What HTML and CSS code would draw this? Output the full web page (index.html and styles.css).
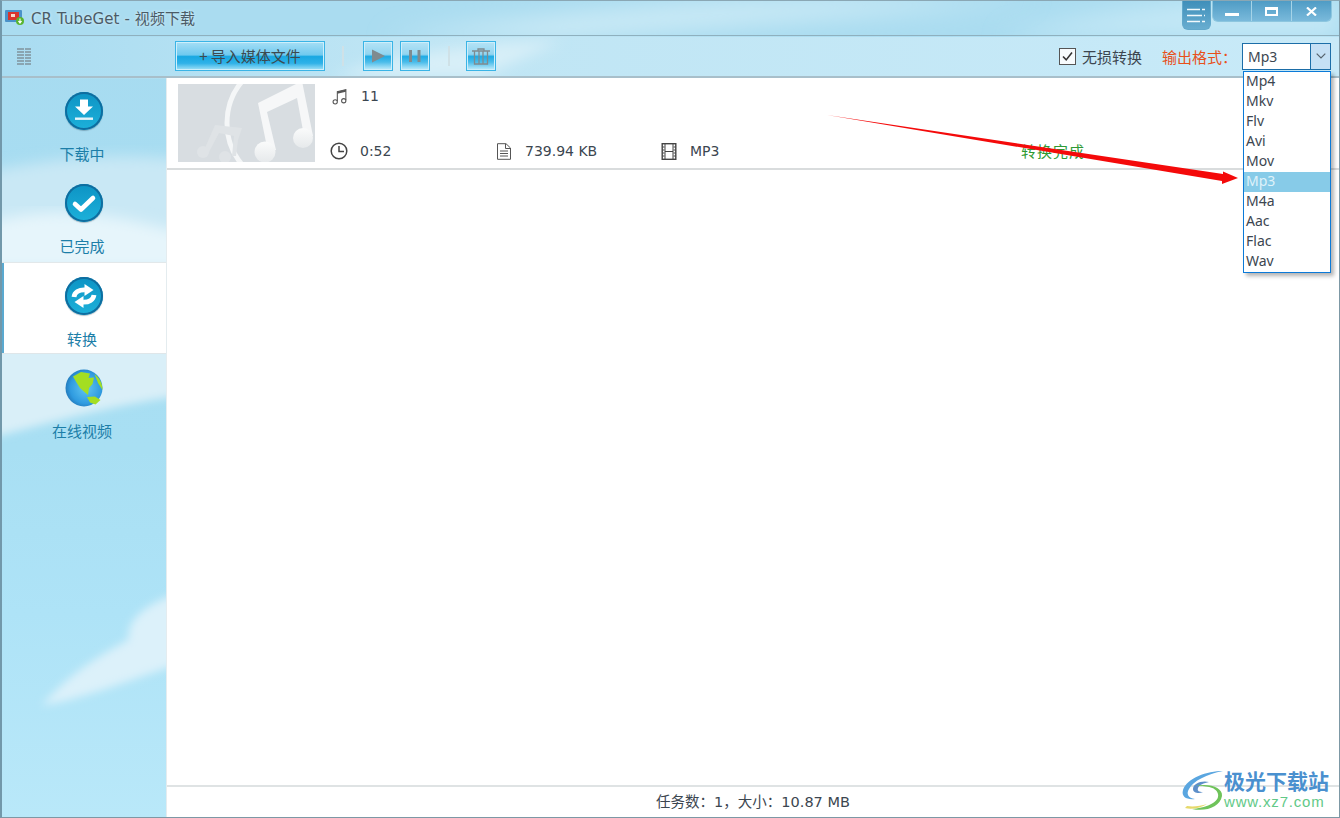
FILE: index.html
```html
<!DOCTYPE html>
<html lang="zh">
<head>
<meta charset="utf-8">
<title>CR TubeGet - 视频下载</title>
<link rel="stylesheet" href="styles.css">
</head>
<body>
<div class="window">
  <svg class="sky" viewBox="0 0 1340 818" preserveAspectRatio="none" aria-hidden="true">
    <defs>
      <linearGradient id="skyg" x1="0" y1="0" x2="0" y2="1">
        <stop offset="0" stop-color="#a7dbf0"/><stop offset=".55" stop-color="#a8dff3"/><stop offset=".75" stop-color="#aee3f7"/><stop offset="1" stop-color="#b9e8f9"/>
      </linearGradient>
      <linearGradient id="tbar" x1="0" y1="0" x2="1" y2="0">
        <stop offset="0" stop-color="#a9dcf1"/><stop offset=".3" stop-color="#bfe5f4"/><stop offset="1" stop-color="#c8eaf8"/>
      </linearGradient>
      <filter id="blur3"><feGaussianBlur stdDeviation="4"/></filter>
      <filter id="blur6"><feGaussianBlur stdDeviation="7"/></filter>
      <filter id="blur14"><feGaussianBlur stdDeviation="12"/></filter>
    </defs>
    <rect width="1340" height="818" fill="url(#skyg)"/>
    <rect y="0" width="1340" height="36" fill="#aadcf0"/>
    <path d="M380 36 C560 14 760 -6 960 0 L1040 0 C900 10 700 24 560 36Z" fill="#d4eef8" filter="url(#blur14)"/>
    <path d="M1000 36 C1060 20 1130 6 1200 0 L1340 0 L1340 36Z" fill="#c4e8f6" filter="url(#blur14)"/>
    <rect y="36" width="1340" height="42" fill="url(#tbar)"/>
    <path d="M330 76 C400 52 470 42 560 40 L480 76Z" fill="#d8eff8" filter="url(#blur6)"/>
    <path d="M-20 172 C40 160 110 150 190 160 L190 262 L-20 262Z" fill="#c9e8f5" filter="url(#blur6)"/>
    <path d="M-20 225 C50 200 120 215 190 235 L190 270 L-20 270Z" fill="#e6f5fb" filter="url(#blur6)"/>
    <path d="M-20 345 L190 345 L190 394 C110 405 60 420 -20 440Z" fill="#d9eff8" filter="url(#blur3)"/>
    <path d="M190 590 L167 597 C140 608 125 622 127 640 C100 655 70 672 40 706 C80 700 130 680 190 660Z" fill="#dcf1fa" filter="url(#blur3)"/>
  </svg>

  <header class="titlebar">
    <div class="title">
      <svg class="app-icon" viewBox="0 0 20 18" aria-hidden="true">
        <rect x="0" y="2" width="17" height="12" rx="1" fill="#4a92c9"/>
        <rect x="3" y="4" width="11" height="8" fill="#d9342b"/>
        <rect x="6" y="6" width="4" height="3" fill="#f7d9c8"/>
        <circle cx="15" cy="13" r="4" fill="#58b52e"/>
        <path d="M15 10.500v4M13.400 13l1.600 2 1.600-2" stroke="#fff" stroke-width="1.100" fill="none"/>
      </svg>
      <span>CR TubeGet - 视频下载</span>
    </div>
    <div class="win-controls">
      <button class="menu-btn" aria-label="菜单">
        <svg viewBox="0 0 18 15" aria-hidden="true"><path d="M0 1.500h13M15 1.500h3M0 7.500h15M17 7.500h1M0 13.500h13M15 13.500h3" stroke="#f2f9fc" stroke-width="1.400"/></svg>
      </button>
      <div class="win-btns">
        <button class="win-btn" aria-label="最小化"><span class="glyph-min"></span></button>
        <button class="win-btn" aria-label="最大化"><span class="glyph-max"></span></button>
        <button class="win-btn" aria-label="关闭">
          <svg viewBox="0 0 11 9" aria-hidden="true"><path d="M1 .5l9 8M10 .5l-9 8" stroke="#fff" stroke-width="2.200"/></svg>
        </button>
      </div>
    </div>
  </header>

  <div class="toolbar">
    <svg class="list-icon" viewBox="0 0 14 17" aria-hidden="true">
      <path d="M0 1h14M0 4h14M0 7h14M0 10h14M0 13h14M0 16h14" stroke="#6b6f72" stroke-width="1.200" stroke-dasharray="7 1 6 0"/>
    </svg>
    <button class="import-btn">+ 导入媒体文件</button>
    <span class="sep sep-a"></span>
    <button class="tool-btn tool-play" aria-label="播放"><svg viewBox="0 0 14 14" aria-hidden="true"><path d="M0 0l14 7-14 7z" fill="#7f8b90"/></svg></button>
    <button class="tool-btn tool-pause" aria-label="暂停"><svg viewBox="0 0 14 14" aria-hidden="true"><path d="M1 1h3v12H1zM9.500 1h3v12h-3z" fill="#7f8b90"/></svg></button>
    <span class="sep sep-b"></span>
    <button class="tool-btn tool-del" aria-label="删除"><svg viewBox="0 0 20 17" aria-hidden="true"><path d="M1 3h18M3.500 3V16H16.500V3M8 3.500V15.500M12 3.500V15.500M7 3V1h6v2" stroke="#7f8b90" stroke-width="1.300" fill="none"/></svg></button>
    <div class="tool-right">
      <label class="lossless"><span class="checkbox"><svg viewBox="0 0 15 15" aria-hidden="true"><path d="M3 7.500l3.200 3.400L12 3.600" stroke="#333" stroke-width="1.600" fill="none"/></svg></span>无损转换</label>
      <span class="format-label">输出格式：</span>
      <div class="combo">
        <span class="combo-value">Mp3</span>
        <span class="combo-arrow"><svg viewBox="0 0 10 6" aria-hidden="true"><path d="M.7.7L5 5l4.300-4.300" stroke="#56626c" stroke-width="1.200" fill="none"/></svg></span>
      </div>
    </div>
  </div>

  <div class="body">
    <nav class="sidebar">
      <a class="nav-item">
        <span class="round-icon"><svg viewBox="0 0 38 38" aria-hidden="true"><path d="M15 7.500h8v7h5l-9 8.500-9-8.500h5z" fill="#fff"/><rect x="10" y="25.500" width="18" height="2.400" fill="#e3f3f9"/></svg></span>
        <span class="nav-label">下载中</span>
      </a>
      <a class="nav-item">
        <span class="round-icon"><svg viewBox="0 0 38 38" aria-hidden="true"><path d="M10 20l6 5.500 12-11.500" stroke="#fff" stroke-width="4.600" fill="none" stroke-linecap="round" stroke-linejoin="round"/></svg></span>
        <span class="nav-label">已完成</span>
      </a>
      <a class="nav-item active">
        <span class="round-icon"><svg viewBox="0 0 38 38" aria-hidden="true">
          <path d="M9 20C9.500 15.500 14 12.500 20 12.800" stroke="#fff" stroke-width="4.800" fill="none"/><path d="M19.500 7L28.500 13l-9 6z" fill="#fff"/>
          <g transform="rotate(180 19 19)"><path d="M9 20C9.500 15.500 14 12.500 20 12.800" stroke="#fff" stroke-width="4.800" fill="none"/><path d="M19.500 7L28.500 13l-9 6z" fill="#fff"/></g>
        </svg></span>
        <span class="nav-label">转换</span>
      </a>
      <a class="nav-item">
        <span class="globe"><svg viewBox="0 0 38 38" aria-hidden="true">
          <defs><radialGradient id="gl" cx=".55" cy=".5" r=".6"><stop offset="0" stop-color="#62c6f1"/><stop offset=".7" stop-color="#2f9be0"/><stop offset="1" stop-color="#1f70b0"/></radialGradient></defs>
          <circle cx="19" cy="19" r="18.500" fill="url(#gl)"/>
          <path d="M8 7.500L16 3L25 4.500L23.500 9L29 8.500L27.500 15L24 19L23 26L19.500 23L15 19L11.500 13.500Z" fill="#a4de22"/>
          <path d="M22 28L30 27.500L35.500 31L30.500 35.500L25 33.500Z" fill="#a4de22"/>
          <path d="M29.500 5C34 8.500 37.500 14 37.500 21L33 14Z" fill="#a4de22"/>
        </svg></span>
        <span class="nav-label">在线视频</span>
      </a>
    </nav>

    <main class="content">
      <section class="task-row">
        <div class="thumb">
          <svg viewBox="0 0 137 78" aria-hidden="true">
            <defs><linearGradient id="noteg" x1="0" y1="0" x2="0" y2="1"><stop offset="0" stop-color="#fafbfb"/><stop offset="1" stop-color="#e6e9eb"/></linearGradient></defs>
            <rect width="137" height="78" fill="#d8dde1"/>
            <circle cx="114" cy="39" r="65" fill="none" stroke="#f4f6f7" stroke-width="5"/>
            <path d="M37 41L64 44L60 56L58 72L54 72L56 52L41 49L31 68L27 64Z" fill="#dfe3e6"/>
            <circle cx="25" cy="68" r="6" fill="#dfe3e6"/><circle cx="47" cy="73" r="6" fill="#dfe3e6"/>
            <path d="M80 19L124 -3L135 52L126 52L119 14L89 28L98 66L90 68Z" fill="#f6f7f8"/>
            <circle cx="125" cy="54" r="10" fill="url(#noteg)"/><circle cx="87" cy="68" r="10.500" fill="url(#noteg)"/>
          </svg>
        </div>
        <div class="meta">
          <div class="meta-line name">
            <svg class="ic ic-note" viewBox="0 0 15 15" aria-hidden="true"><path d="M5 12V3l8-2v10" stroke="#555" stroke-width="1" fill="none"/><path d="M5 3l8-2v2l-8 2z" fill="#555"/><circle cx="3" cy="12.500" r="2" fill="#fff" stroke="#555"/><circle cx="11" cy="11.500" r="2" fill="#fff" stroke="#555"/></svg>
            <span>11</span>
          </div>
          <div class="meta-line stats">
            <span class="stat stat-time">
              <svg class="ic" viewBox="0 0 18 18" aria-hidden="true"><circle cx="9" cy="9" r="7.800" fill="none" stroke="#444" stroke-width="1.500"/><path d="M9 4v5.500h5" stroke="#444" stroke-width="1.500" fill="none"/></svg>
              <span>0:52</span>
            </span>
            <span class="stat stat-size">
              <svg class="ic" viewBox="0 0 15 17" aria-hidden="true"><path d="M1 .7h8.500L14 5v11.300H1z" fill="none" stroke="#555"/><path d="M9 1v4.500h5M3.500 8h8M3.500 10.500h8M3.500 13h8" stroke="#555" fill="none"/></svg>
              <span>739.94 KB</span>
            </span>
            <span class="stat stat-type">
              <svg class="ic" viewBox="0 0 15 17" aria-hidden="true"><rect x=".7" y=".7" width="13.600" height="15.600" fill="none" stroke="#444" stroke-width="1.400"/><path d="M3.500 1v15M11.500 1v15M3.500 8.500h8" stroke="#444"/><path d="M1 4h2M1 7h2M1 10h2M1 13h2M12 4h2M12 7h2M12 10h2M12 13h2" stroke="#444"/></svg>
              <span>MP3</span>
            </span>
            <span class="stat-done">转换完成</span>
          </div>
        </div>
      </section>
      <div class="spacer"></div>
      <footer class="statusbar">任务数：1，大小：10.87 MB</footer>
    </main>
  </div>

  <ul class="dropdown">
    <li>Mp4</li><li>Mkv</li><li>Flv</li><li>Avi</li><li>Mov</li>
    <li class="selected">Mp3</li>
    <li>M4a</li><li>Aac</li><li>Flac</li><li>Wav</li>
  </ul>

  <svg class="arrow" viewBox="0 0 420 80" aria-hidden="true">
    <path d="M1 2 L397 61 L397 58.500 L412 65 L396 71 L396 68 Z" fill="#f40a0a"/>
  </svg>

  <div class="watermark">
    <svg class="wm-logo" viewBox="0 0 44 44" aria-hidden="true">
      <path d="M42 3C26 3 6 10 2 22c-2 7 4 10 12 9-7-1-9-5-6-10C12 13 26 6 42 3z" fill="#5aa6e0"/>
      <path d="M28 14c-8-2-16 2-16 7 0 4 6 5 10 3-4 0-6-1-5-4 1-3 6-5 11-6z" fill="#5d8fc9"/>
      <path d="M18 16c8 0 20 0 22 8 2 9-14 14-26 15 14 3 28-2 30-13 1-8-12-13-26-10z" fill="#6fc35a" transform="translate(-3 2)"/>
      <path d="M6 38c6 1 14 0 20-2-6 4-16 6-22 4z" fill="#e6d96a"/>
    </svg>
    <div class="wm-text">
      <div class="wm-cn">极光下载站</div>
      <div class="wm-url">www.xz7.com</div>
    </div>
  </div>
</div>
</body>
</html>
```
FILE: styles.css
```css
* { box-sizing: border-box; }
html, body { margin: 0; padding: 0; height: 100%; overflow: hidden; }
body { font-family: "DejaVu Sans", "Noto Sans CJK SC", sans-serif; font-size: 14px; color: #3c4650; }
button { font: inherit; padding: 0; border: 0; background: none; }

.window { position: relative; width: 1340px; height: 818px; display: flex; flex-direction: column; border: 1px solid #7d98a5; border-left: 2px solid #7298aa; border-top-color: #8aa7b4; overflow: hidden; }
.sky { position: absolute; inset: 0; width: 100%; height: 100%; }

.titlebar { position: relative; height: 35px; flex: none; display: flex; justify-content: space-between; border-bottom: 1px solid #8fb0be; }
.title { display: flex; align-items: center; gap: 6px; padding: 0 0 2px 3px; font-size: 15px; letter-spacing: .1px; color: #4b5b66; text-shadow: 0 0 3px #dff3fb; }
.app-icon { width: 20px; height: 18px; }
.win-controls { display: flex; align-items: flex-start; padding-right: 7px; gap: 1px; }
.menu-btn { width: 29px; height: 29px; border: 1px solid #62a8cb; border-top: 0; border-radius: 0 0 6px 6px; background: linear-gradient(#3f8fba, #68add0); display: flex; align-items: center; justify-content: center; }
.menu-btn svg { width: 18px; height: 15px; }
.win-btns { display: flex; height: 21px; background: linear-gradient(#4f9cc5, #7abadb); border: 1px solid #8cc6df; border-top: 0; border-radius: 0 0 6px 6px; }
.win-btn { width: 39.500px; display: flex; align-items: center; justify-content: center; border-right: 1px solid #a5d4e8; }
.win-btn:last-child { border-right: 0; }
.win-btn svg { width: 11px; height: 9px; }
.glyph-min { width: 14px; height: 3px; background: #fff; margin-top: 6px; }
.glyph-max { width: 13px; height: 9px; border: 2px solid #fff; border-top-width: 3px; }

.toolbar { position: relative; height: 42px; flex: none; display: flex; align-items: center; border-bottom: 2px solid #a8bfca; padding-left: 15px; font-family: "Noto Sans CJK SC", sans-serif; font-size: 15px; }
.list-icon { width: 14px; height: 17px; margin-right: 144px; }
.import-btn, .tool-btn { border: 1px solid #3ab4e6; box-shadow: inset 0 0 0 1px #cdeffb; }
.import-btn { width: 150px; height: 30px; color: #3c4a50; font-size: 15px; font-family: "Noto Sans CJK SC", sans-serif; line-height: 28px; background: linear-gradient(#a6def5 0, #6fcaef 46%, #19a8e2 52%, #2fb2e8 76%, #a4e2f7 100%); }
.sep { width: 2px; height: 20px; background: #cfe1e7; }
.sep-a { margin: 0 19px 0 17px; }
.sep-b { margin: 0 16px 0 18px; }
.tool-btn { width: 30px; height: 30px; display: flex; align-items: center; justify-content: center; background: linear-gradient(#b5e3f6 0, #92d5f0 44%, #1fabe4 52%, #4cbdea 72%, #c5edfb 100%); }
.tool-btn svg { width: 14px; height: 14px; }
.tool-play svg { width: 13px; height: 14px; margin-left: 1px; }
.tool-pause { margin-left: 7px; }
.tool-del svg { width: 20px; height: 17px; }
.tool-right { margin-left: auto; display: flex; align-items: center; padding-right: 8px; }
.lossless { display: flex; align-items: center; gap: 6px; color: #3c4650; margin-right: 20px; }
.checkbox { width: 17px; height: 17px; border: 1px solid #555; background: #f7fbfd; display: flex; }
.checkbox svg { width: 15px; height: 15px; }
.format-label { width: 80px; color: #e8501a; }
.combo { width: 89px; height: 27px; border: 1px solid #1c6ea8; background: #fff; display: flex; }
.combo-value { flex: 1; padding: 0 0 0 5px; line-height: 26px; color: #3c4650; font-family: "Noto Sans", sans-serif; font-size: 14px; }
.combo-arrow { width: 20px; background: #c5e0f5; border-left: 1px solid #1c6ea8; display: flex; align-items: center; justify-content: center; }
.combo-arrow svg { width: 10px; height: 6px; }

.body { position: relative; flex: 1; min-height: 0; display: flex; }
.sidebar { width: 164px; flex: none; display: flex; flex-direction: column; }
.nav-item { height: 92.300px; display: flex; flex-direction: column; align-items: center; padding-top: 14px; }
.nav-item.active { background: #fff; height: 90.500px; margin-bottom: 1.800px; border-left: 3px solid #5aa9d0; margin-left: -1px; padding-right: 2px; box-shadow: 0 -1px 0 #e2e8ea, 0 1px 0 #dfe6e9; }
.round-icon, .globe { width: 38px; height: 38px; display: block; border-radius: 50%; }
.round-icon { background: linear-gradient(#0d93c4, #1db1da); box-shadow: inset 0 0 0 2px #0f6d9f, 0 1px 1px rgba(40,70,90,.35); }
.round-icon svg, .globe svg { width: 38px; height: 38px; display: block; }
.nav-label { margin: 13px 4px 0 0; font-family: "Noto Sans CJK SC", sans-serif; font-size: 15px; line-height: 22px; color: #1c7ea8; }

.content { flex: 1; min-width: 0; background: #fff; display: flex; flex-direction: column; border-left: 1px solid #e4ecef; }
.task-row { height: 92px; flex: none; display: flex; padding: 6px 0 0 11px; border-bottom: 2px solid #d9dcdd; }
.thumb { width: 137px; height: 78px; flex: none; }
.thumb svg { width: 137px; height: 78px; display: block; }
.meta { flex: 1; padding-left: 15px; display: flex; flex-direction: column; }
.meta-line { display: flex; align-items: center; color: #3c4650; }
.name { height: 24px; }
.ic-note { margin-left: 2px; }
.ic { width: 16px; height: 17px; flex: none; }
.name span { margin-left: 13px; }
.stats { height: 24px; margin-top: 31px; }
.stat { display: flex; align-items: center; }
.stat-time { width: 166px; gap: 12px; }
.stat-time .ic { width: 18px; height: 18px; }
.stat-size { width: 165px; gap: 13px; }
.stat-type { width: 360px; gap: 13px; }
.stat-done { font-family: "Noto Sans CJK SC", sans-serif; font-size: 15px; line-height: 20px; margin-top: -1px; color: #2e9a34; letter-spacing: 1px; }

.spacer { flex: 1; }
.statusbar { height: 32px; flex: none; padding-bottom: 3px; border-top: 2px solid #dfe3e4; display: flex; align-items: center; justify-content: center; color: #3c4650; font-size: 14.500px; }

.dropdown { position: absolute; left: 1241px; top: 70px; width: 88px; height: 202px; margin: 0; padding: 0; list-style: none; background: #fff; border: 1px solid #0b7ad8; box-shadow: 3px 3px 4px rgba(0,0,0,.3); font-family: "Noto Sans", sans-serif; }
.dropdown li { height: 20px; line-height: 18px; padding-left: 2px; color: #3c4650; }
.dropdown .selected { background: #87cbe8; color: #dff2fa; }

.arrow { position: absolute; left: 824px; top: 112px; width: 420px; height: 80px; pointer-events: none; }

.watermark { position: absolute; left: 1179px; top: 766px; display: flex; align-items: flex-start; }
.wm-logo { width: 44px; height: 44px; margin-top: 1px; }
.wm-text { margin-left: -1px; }
.wm-cn { font-family: "Noto Sans CJK SC", sans-serif; font-weight: 700; font-size: 21px; line-height: 26px; color: #4a90cf; }
.wm-url { font-family: "Liberation Sans", sans-serif; font-size: 15px; line-height: 16px; color: #62c987; letter-spacing: .8px; margin-top: 1px; }
```
